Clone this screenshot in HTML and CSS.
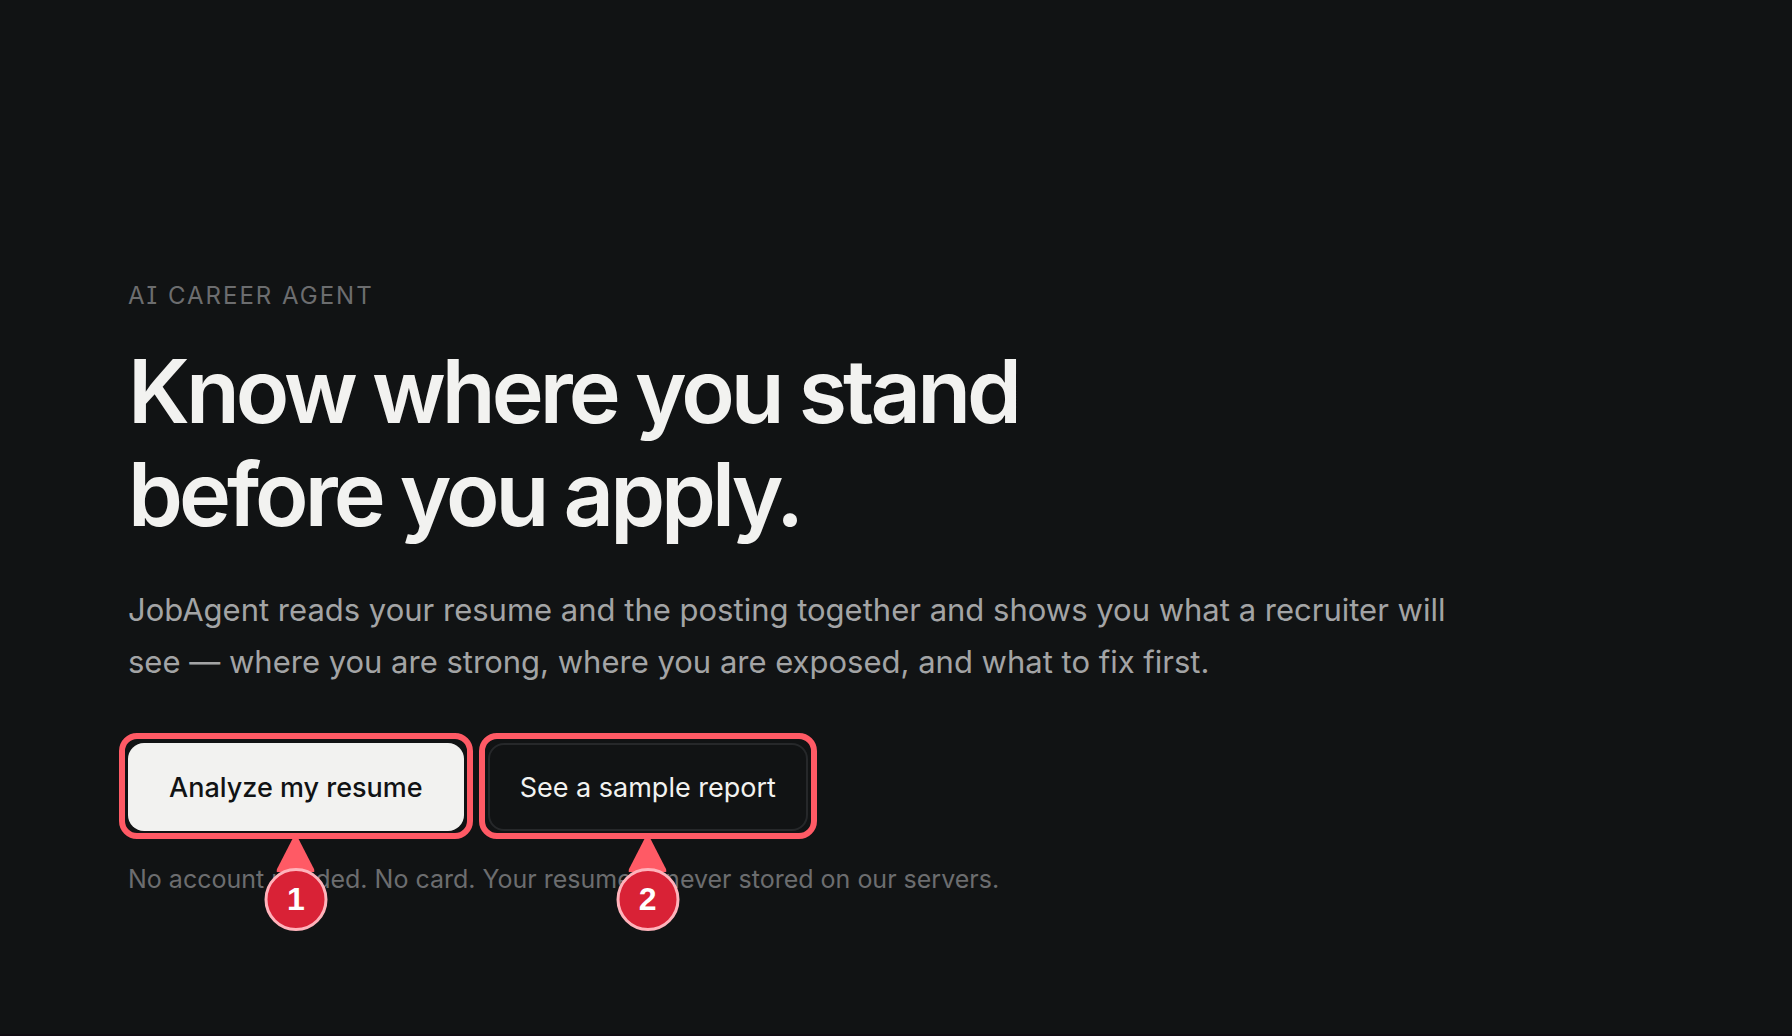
FILE: index.html
```html
<!DOCTYPE html>
<html lang="en">

<head>
  <meta charset="UTF-8">
  <meta name="viewport" content="width=device-width, initial-scale=1.0">
  <title>JobAgent</title>
  <link rel="stylesheet" href="styles.css">
</head>

<body>
  <main class="hero">
    <p class="eyebrow">AI CAREER AGENT</p>
    <h1>Know where you stand<br>before you apply.</h1>
    <p class="lead">JobAgent reads your resume and the posting together and shows you what a recruiter will see — where you are strong, where you are exposed, and what to fix first.</p>

    <div class="actions">
      <div class="action">
        <button type="button" class="btn btn-primary">Analyze my resume</button>
        <div class="callout">
          <div class="marker">
            <svg class="pointer" viewBox="0 0 38 39" aria-hidden="true"><path d="M19 0l19 37v2H0v-2z"/></svg>
            <span class="badge">1</span>
          </div>
        </div>
      </div>
      <div class="action">
        <button type="button" class="btn btn-outline">See a sample report</button>
        <div class="callout">
          <div class="marker">
            <svg class="pointer" viewBox="0 0 38 39" aria-hidden="true"><path d="M19 0l19 37v2H0v-2z"/></svg>
            <span class="badge">2</span>
          </div>
        </div>
      </div>
    </div>

    <p class="note">No account needed. No card. Your resume is never stored on our servers.</p>
  </main>
</body>

</html>
```

FILE: styles.css
```css
* {
  box-sizing: border-box;
}

body {
  min-height: 100vh;
  margin: 0;
  border-bottom: 2px solid #100c12;
  background: #111314;
  color: #f2f2f0;
  font-family: Inter, "Liberation Sans", sans-serif;
}

.hero {
  padding: 280px 128px 80px;
}

.eyebrow {
  margin: 0;
  color: #6c6d6f;
  font-size: 24px;
  line-height: 32px;
  letter-spacing: 2px;
  /* capital I with serifs */
  font-feature-settings: "cv08";
}

h1 {
  margin: 28px 0 0;
  font-size: 88px;
  font-weight: 600;
  line-height: 103px;
  letter-spacing: -4px;
}

.lead {
  max-width: 1344px;
  margin: 38px 0 0;
  color: #a3a4a5;
  font-size: 31px;
  line-height: 52px;
}

.actions {
  display: flex;
  gap: 24px;
  margin-top: 55px;
}

.action {
  position: relative;
}

.btn {
  display: block;
  height: 88px;
  border: 2px solid transparent;
  border-radius: 16px;
  font-family: inherit;
  font-size: 27px;
  cursor: pointer;
}

.btn-primary {
  padding: 0 39px;
  background: #f2f2f0;
  color: #111314;
  font-weight: 500;
}

.btn-outline {
  padding: 0 30px;
  border-color: #26282a;
  background: transparent;
  color: #f2f2f0;
}

/* highlight ring drawn over a button */
.callout {
  position: absolute;
  inset: -10px -9px -8px;
  border: 6px solid #ff5a65;
  border-radius: 18px;
  pointer-events: none;
}

.marker {
  position: absolute;
  top: 100%;
  left: 50%;
  display: flex;
  flex-direction: column;
  align-items: center;
  transform: translateX(-50%);
}

.pointer {
  width: 38px;
  height: 39px;
  fill: #ff5a65;
}

.badge {
  width: 63px;
  height: 63px;
  margin-top: -4px;
  border: 3px solid #ffb3bb;
  border-radius: 50%;
  background: #d92236;
  color: #fff;
  font-family: "Liberation Sans", Arial, sans-serif;
  font-size: 32px;
  font-weight: 700;
  line-height: 57px;
  text-align: center;
}

.note {
  margin: 32px 0 0;
  color: #6c6d6f;
  font-size: 25px;
  line-height: 32px;
}
```
